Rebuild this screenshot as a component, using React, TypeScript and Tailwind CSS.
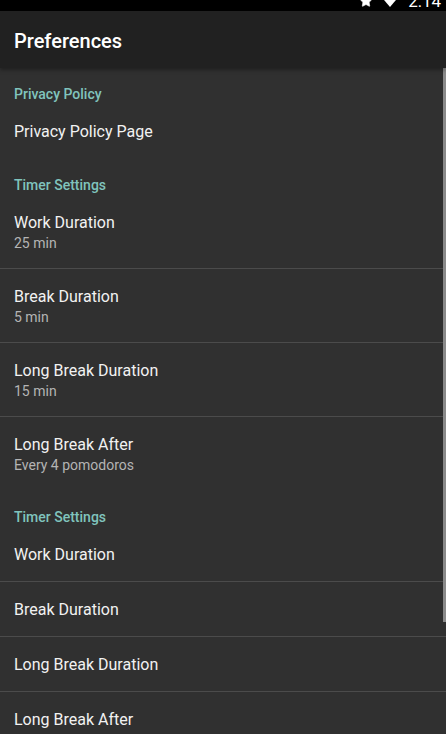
import { Star } from 'lucide-react';

type Pref = { title: string; summary?: string };

const groups: { header: string; items: Pref[] }[] = [
  { header: 'Privacy Policy', items: [{ title: 'Privacy Policy Page' }] },
  {
    header: 'Timer Settings',
    items: [
      { title: 'Work Duration', summary: '25 min' },
      { title: 'Break Duration', summary: '5 min' },
      { title: 'Long Break Duration', summary: '15 min' },
      { title: 'Long Break After', summary: 'Every 4 pomodoros' },
    ],
  },
  {
    header: 'Timer Settings',
    items: [
      { title: 'Work Duration' },
      { title: 'Break Duration' },
      { title: 'Long Break Duration' },
      { title: 'Long Break After' },
    ],
  },
];

function StatusBar() {
  return (
    <div className="h-[11px] bg-black overflow-hidden">
      <div className="-mt-[9px] h-[20px] flex items-center justify-end gap-[9px] pr-[5px] text-white">
        <Star className="w-[14px] h-[14px]" fill="white" strokeWidth={1} />
        <svg viewBox="0 0 24 24" className="w-[16px] h-[16px]" fill="white">
          <path d="M12 21 L23.5 7.5 C20.5 5 16.5 3.5 12 3.5 C7.5 3.5 3.5 5 0.5 7.5 Z" />
        </svg>
        <span className="text-[17px] leading-[20px] ml-[1px]">2:14</span>
      </div>
    </div>
  );
}

export default function App() {
  return (
    <div className="w-[446px] h-[734px] overflow-hidden bg-[#303030] font-['Roboto',sans-serif] relative">
      <StatusBar />

      {/* App bar */}
      <div className="relative z-10 h-[57px] bg-[#212121] flex items-center px-[14px] pt-[2px] shadow-[0_2px_4px_rgba(0,0,0,0.35)]">
        <h1 className="text-[20px] font-medium text-white">Preferences</h1>
      </div>

      {/* Preference list */}
      <div>
        {groups.map((group, gi) => (
          <div key={gi}>
            <div className="pt-[18px] pb-[2px] px-[14px] text-[14px] leading-[16px] font-medium text-[#80c4bd]">
              {group.header}
            </div>
            {group.items.map((item, ii) => {
              const last = ii === group.items.length - 1;
              let cls = 'px-[14px] pt-[18px] ';
              if (last) cls += item.summary ? 'pb-[17px]' : 'pb-[17px]';
              else cls += (item.summary ? 'pb-[16px]' : 'pb-[16px]') + ' border-b border-[#4b4b4b]';
              return (
                <div key={ii} className={cls}>
                  <div className="text-[16px] leading-[20px] text-[#f2f2f2]">{item.title}</div>
                  {item.summary && (
                    <div className="mt-[1px] text-[14px] leading-[18px] text-[#b4b4b4]">{item.summary}</div>
                  )}
                </div>
              );
            })}
          </div>
        ))}
      </div>

      {/* Scrollbar thumb */}
      <div className="absolute right-0 top-[68px] w-[3px] h-[554px] bg-[#8a8a8a]" />
    </div>
  );
}
